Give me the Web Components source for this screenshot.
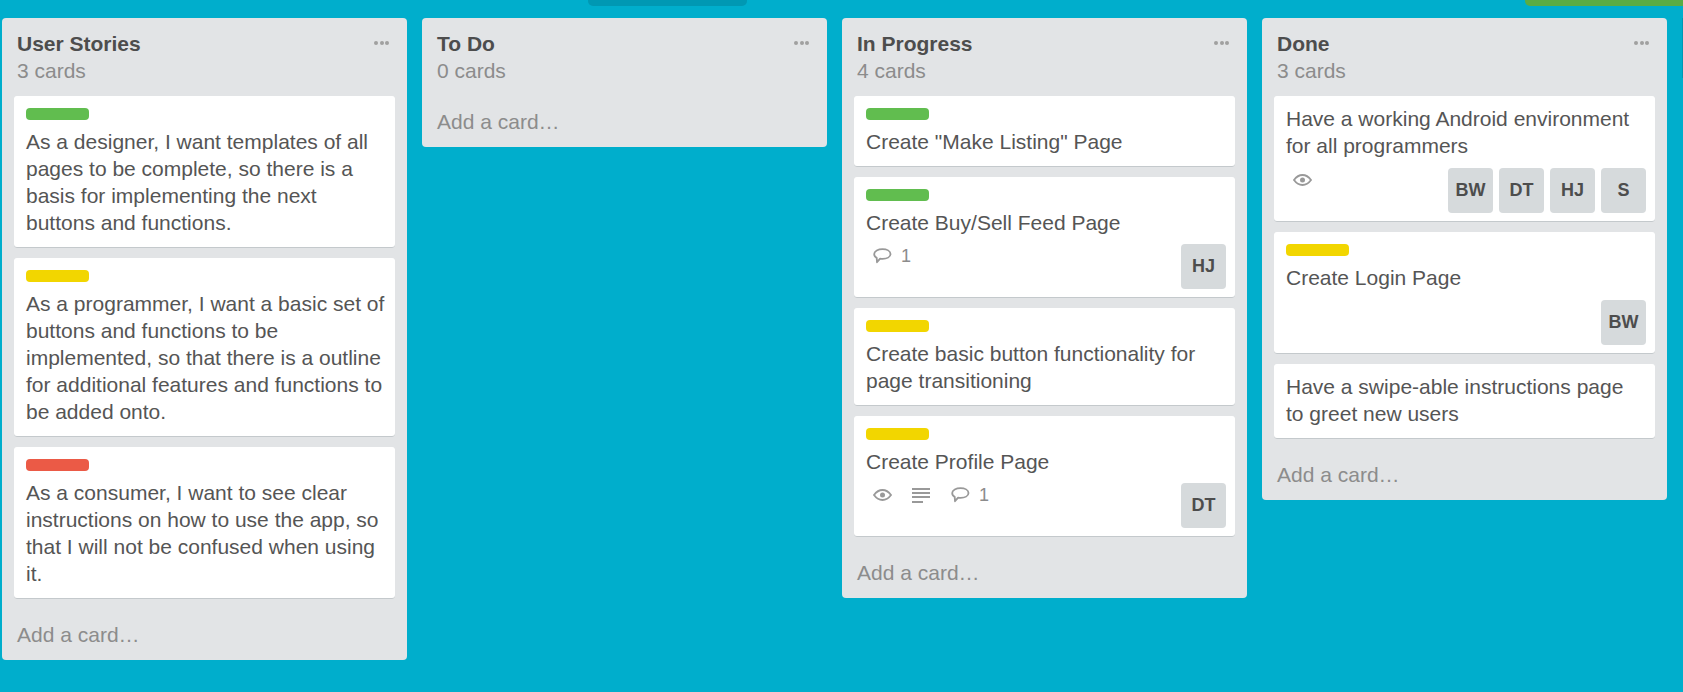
<!DOCTYPE html>
<html>
<head>
<meta charset="utf-8">
<title>Board</title>
<style>
  html, body { margin: 0; height: 100%; background: #00aecc; overflow: hidden; }
  body { font: 21px/27px "Liberation Sans", Arial, sans-serif; color: #555; }
</style>
</head>
<body>
<board-view>
  <board-list name="User Stories" count="3 cards">
    <board-card label="green">As a designer, I want templates of all pages to be complete, so there is a basis for implementing the next buttons and functions.</board-card>
    <board-card label="yellow">As a programmer, I want a basic set of buttons and functions to be implemented, so that there is a outline for additional features and functions to be added onto.</board-card>
    <board-card label="red">As a consumer, I want to see clear instructions on how to use the app, so that I will not be confused when using it.</board-card>
  </board-list>
  <board-list name="To Do" count="0 cards"></board-list>
  <board-list name="In Progress" count="4 cards">
    <board-card label="green">Create "Make Listing" Page</board-card>
    <board-card label="green" tight badges="comment" comments="1" members="HJ">Create Buy/Sell Feed Page</board-card>
    <board-card label="yellow">Create basic button functionality for page transitioning</board-card>
    <board-card label="yellow" tight badges="eye,desc,comment" comments="1" members="DT">Create Profile Page</board-card>
  </board-list>
  <board-list name="Done" count="3 cards">
    <board-card badges="eye" members="BW,DT,HJ,S">Have a working Android environment for all programmers</board-card>
    <board-card label="yellow" members="BW">Create Login Page</board-card>
    <board-card>Have a swipe-able instructions page to greet new users</board-card>
  </board-list>
  <board-add-list></board-add-list>
</board-view>

<script>
const ICONS = {
  eye: `<svg width="19" height="12" viewBox="0 0 19 12" fill="none"><path d="M1 6C3.4 2.7 6.2 1 9.500 1s6.100 1.700 8.500 5c-2.400 3.300-5.200 5-8.500 5S3.400 9.300 1 6z" stroke="#999" stroke-width="1.800"/><circle cx="9.500" cy="6" r="2.500" fill="#999"/></svg>`,
  desc: `<svg width="19" height="15" viewBox="0 0 19 15" fill="#999"><rect y="0" width="18" height="2"/><rect y="4" width="18" height="2"/><rect y="8" width="18" height="2"/><rect y="13" width="11" height="2"/></svg>`,
  comment: `<svg width="19" height="16" viewBox="0 0 19 16" fill="none"><path d="M9.500 1.200c4.300 0 8 1.800 8 4.800s-3.700 4.800-8 4.800c-.9 0-1.700-.1-2.400-.2L4 14.200l-.3-4.300C2 9 1.200 7.600 1.200 6c0-3 4-4.800 8.300-4.800z" stroke="#999" stroke-width="1.800" stroke-linejoin="round"/></svg>`
}

const LABEL_COLORS = { green: "#61bd4f", yellow: "#f2d600", red: "#eb5a46" }

// top strip with the two tabs that stick out of the hidden header
class BoardView extends HTMLElement {
  constructor() {
    super()
    this.attachShadow({ mode: "open" }).innerHTML = `
      <style>
        :host { display: block; }
        .strip { display: flex; height: 6px; margin-bottom: 12px; }
        .tab { background: #0098b3; width: 159px; margin-left: 588px; border-radius: 0 0 5px 5px; }
        .tab.green { background: #5aac44; width: auto; flex: 1; margin-left: 778px; border-radius: 0 0 0 5px; }
        .lists { display: flex; align-items: flex-start; gap: 15px; padding-left: 2px; }
      </style>
      <div class="strip"><div class="tab"></div><div class="tab green"></div></div>
      <div class="lists"><slot></slot></div>
    `
  }
}

// the panel past the last list, it gets the last pixel of the row
class BoardAddList extends HTMLElement {
  constructor() {
    super()
    this.attachShadow({ mode: "open" }).innerHTML = `
      <style>
        :host { display: block; flex: 1 1 0; min-width: 0; height: 60px; background: rgba(0,0,0,.12); }
      </style>
    `
  }
}

class BoardList extends HTMLElement {
  constructor() {
    super()
    this.attachShadow({ mode: "open" })
  }

  connectedCallback() {
    this.shadowRoot.innerHTML = `
      <style>
        :host {
          display: block;
          flex: 0 0 405px;
          background: #e2e4e6;
          border-radius: 4px;
          padding-top: 12px;
          padding-bottom: 12px;
        }
        .head { display: flex; justify-content: space-between; padding: 0 18px 0 15px; margin-bottom: 12px; }
        .name { font-weight: bold; color: #4d4d4d; }
        .count { color: #8c8c8c; }
        .menu { display: flex; gap: 1.5px; margin-top: 11px; height: 4px; }
        .menu i { width: 4px; height: 4px; border-radius: 50%; background: #a0a0a0; }
        .cards { padding: 0 12px; }
        .add { color: #8c8c8c; padding: 12px 15px 0; }
      </style>
      <div class="head">
        <div><div class="name">${this.getAttribute("name")}</div><div class="count">${this.getAttribute("count")}</div></div>
        <div class="menu"><i></i><i></i><i></i></div>
      </div>
      <div class="cards"><slot></slot></div>
      <div class="add">Add a card…</div>
    `
  }
}

class BoardCard extends HTMLElement {
  constructor() {
    super()
    this.attachShadow({ mode: "open" })
  }

  connectedCallback() {
    const label = this.getAttribute("label")
    const badges = (this.getAttribute("badges") || "").split(",").filter(Boolean)
    const members = (this.getAttribute("members") || "").split(",").filter(Boolean)
    const comments = this.getAttribute("comments")

    const badgeHtml = badges.map(b => `<span class="badge">${ICONS[b]}${b === "comment" ? `<span class="num">${comments}</span>` : ""}</span>`).join("")
    const memberHtml = members.map(m => `<span class="member">${m}</span>`).join("")
    const hasFoot = badges.length || members.length

    this.shadowRoot.innerHTML = `
      <style>
        :host {
          display: block;
          background: #fff;
          border-radius: 3px;
          box-shadow: inset 0 -1px 0 #c4c9cc;
          margin-bottom: 10px;
          padding: 9px 10px 12px 12px;
        }
        :host([label]) { padding-top: 12px; }
        :host([members]) { padding-bottom: 9px; padding-right: 9px; }
        .label { width: 63px; height: 12px; border-radius: 4px; margin-bottom: 8px; }
        .foot { display: flex; justify-content: space-between; margin-top: 9px; }
        :host([tight]) .foot { margin-top: 8px; }
        .badges { display: flex; gap: 20px; padding-left: 7px; height: 24px; align-items: center; }
        .badge { display: flex; align-items: center; gap: 9px; color: #8c8c8c; font-size: 18px; }
        .badge svg { display: block; }
        .members { display: flex; gap: 6px; }
        .member {
          width: 45px;
          height: 45px;
          border-radius: 4px;
          background: #d6dadc;
          color: #4d4d4d;
          font-weight: bold;
          font-size: 18px;
          line-height: 45px;
          text-align: center;
        }
      </style>
      ${label ? `<div class="label" style="background:${LABEL_COLORS[label]}"></div>` : ""}
      <slot></slot>
      ${hasFoot ? `<div class="foot"><div class="badges">${badgeHtml}</div><div class="members">${memberHtml}</div></div>` : ""}
    `
  }
}

customElements.define("board-view", BoardView)
customElements.define("board-add-list", BoardAddList)
customElements.define("board-list", BoardList)
customElements.define("board-card", BoardCard)
</script>
</body>
</html>
